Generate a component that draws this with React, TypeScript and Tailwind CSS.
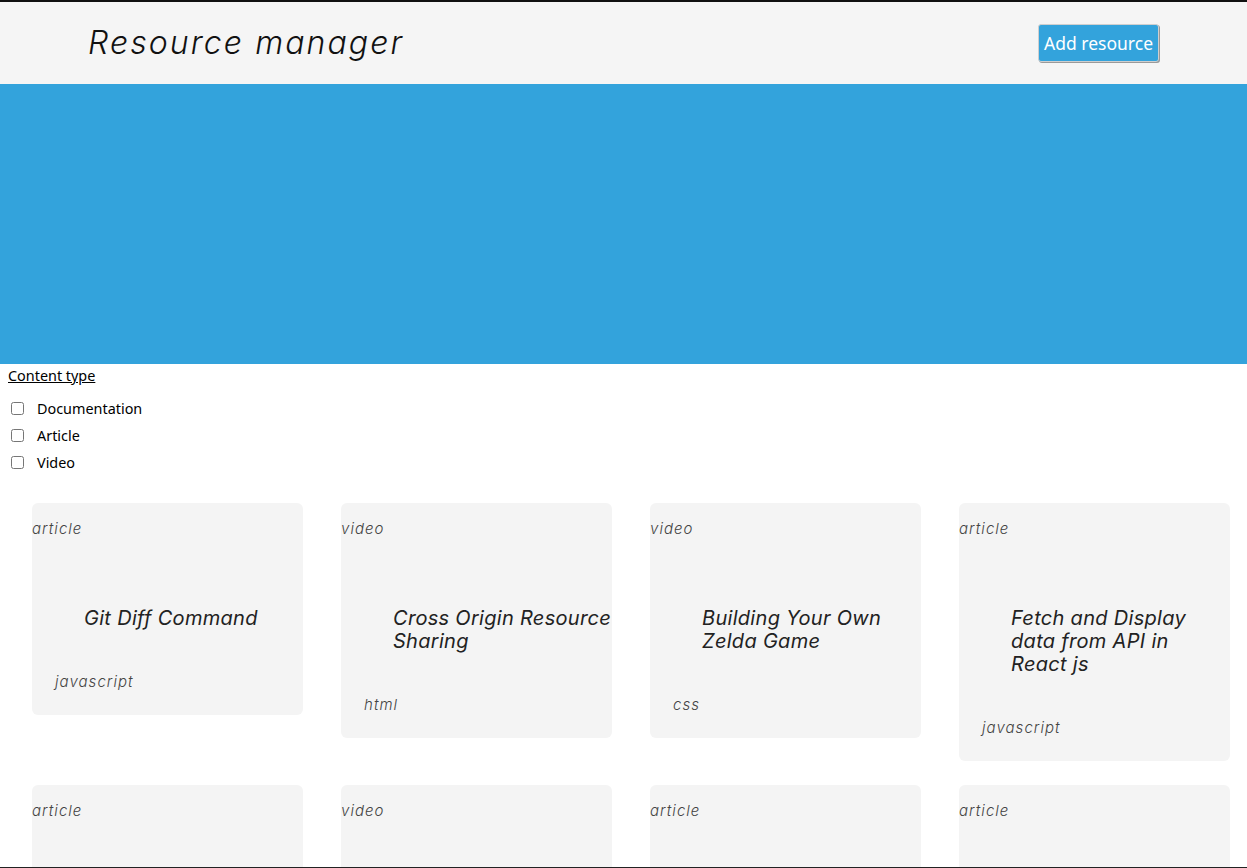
const resources = [
  { type: 'article', title: ['Git Diff Command'], tag: 'javascript' },
  { type: 'video', title: ['Cross Origin Resource', 'Sharing'], tag: 'html' },
  { type: 'video', title: ['Building Your Own', 'Zelda Game'], tag: 'css' },
  { type: 'article', title: ['Fetch and Display', 'data from API in', 'React js'], tag: 'javascript' },
  { type: 'article', title: ['Understanding Flexbox'], tag: 'css' },
  { type: 'video', title: ['Async Await Explained'], tag: 'javascript' },
  { type: 'article', title: ['Semantic HTML Elements'], tag: 'html' },
  { type: 'article', title: ['CSS Grid Layout'], tag: 'css' },
];

const filters = ['Documentation', 'Article', 'Video'];

function Card({ type, title, tag }: { type: string; title: string[]; tag: string }) {
  return (
    <div className="bg-[#f4f4f4] rounded-md pt-[16px] pb-[23px] font-['Inter',sans-serif] italic">
      <p className="text-[15px] leading-[20px] font-light text-[#444] tracking-[0.07em]">{type}</p>
      <h3 className="mt-[68px] ml-[52px] text-[20px] leading-[23px] text-[#222] tracking-[0.015em]">
        {title.map((line) => (
          <span key={line} className="block whitespace-nowrap">{line}</span>
        ))}
      </h3>
      <p className="mt-[42px] ml-[23px] text-[15px] leading-[20px] font-light text-[#444] tracking-[0.07em]">{tag}</p>
    </div>
  );
}

function App() {
  return (
    <div className="min-h-screen bg-white">
      <header className="h-[84px] border-t-2 border-[#111] bg-[#f5f5f5] flex items-center justify-between px-[88px]">
        <h1 className="font-['Inter',sans-serif] italic font-light text-[32px] text-[#111] tracking-[0.065em]">Resource manager</h1>
        <button className="h-[38px] px-[5px] rounded-[3px] bg-[#33a3dc] border border-[#cfcfcf] shadow-[1px_1px_0_#9a9a9a] text-white text-[17.5px] font-['Noto_Sans',sans-serif]">
          Add resource
        </button>
      </header>

      {/* hero band */}
      <div className="h-[280px] bg-[#33a3dc]" />

      <div className="font-['Noto_Sans',sans-serif] text-[14.4px] text-black">
        <p className="mt-[2px] ml-2 leading-[20px] underline">Content type</p>
        <div className="mt-[9px]">
          {filters.map((f) => (
            <label key={f} className="flex items-center h-[27px] pl-[11px]">
              <input type="checkbox" className="w-[13px] h-[13px]" />
              <span className="ml-[13px]">{f}</span>
            </label>
          ))}
        </div>
      </div>

      <div className="mt-[27px] pl-8 grid grid-cols-[repeat(4,271px)] gap-x-[38px] gap-y-6 items-start pb-10">
        {resources.map((r, i) => (
          <Card key={i} {...r} />
        ))}
      </div>

      <div className="fixed bottom-0 left-0 right-0 h-px bg-[#222]" />
    </div>
  );
}

export default App
